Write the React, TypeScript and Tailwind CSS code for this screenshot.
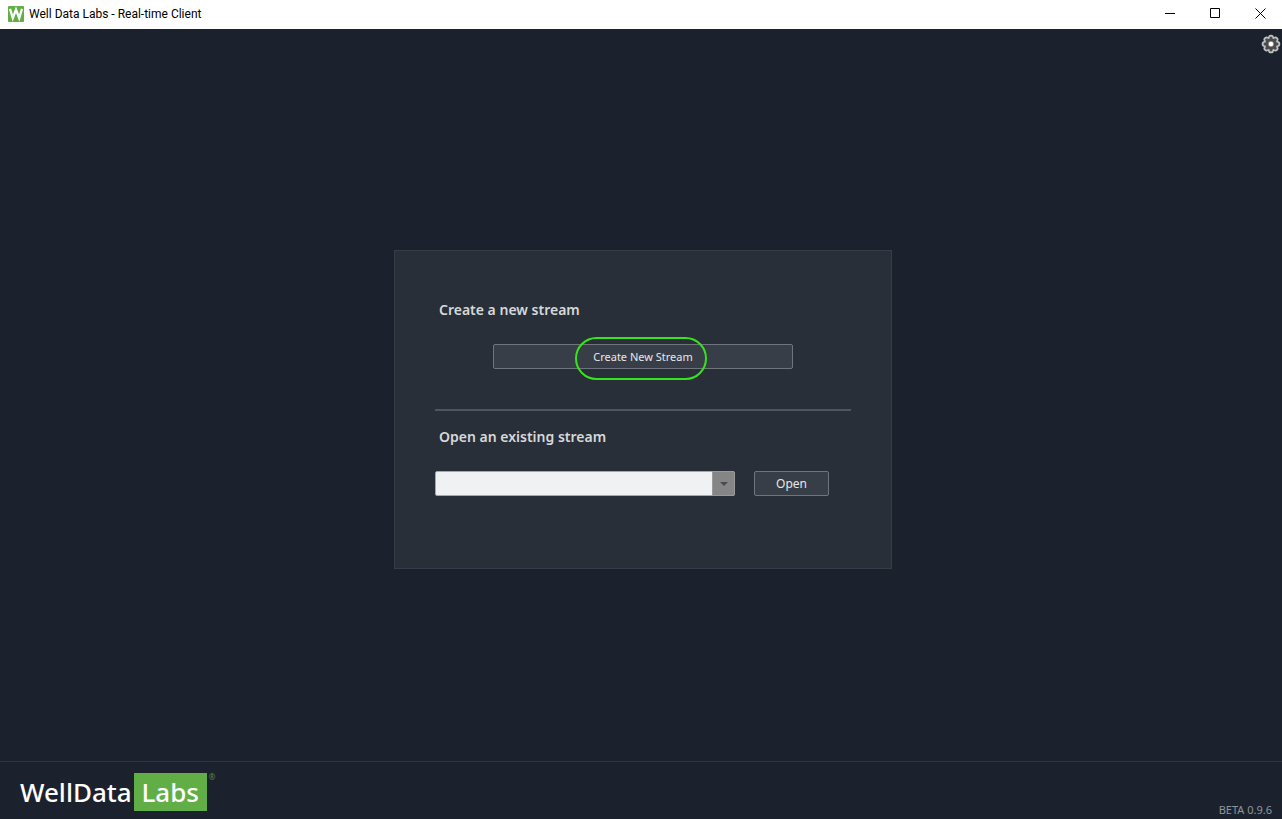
import { useState } from "react";

function AppIcon() {
  return (
    <svg width="16" height="16" viewBox="0 0 16 16" aria-hidden="true">
      <rect width="16" height="16" rx="1" fill="#62ae46" />
      <path
        d="M2 2.8 4.8 12.2 8 3.6 11.2 12.2 14 2.8"
        fill="none"
        stroke="#fff"
        strokeWidth="2.3"
      />
    </svg>
  );
}

function GearIcon() {
  const teeth = [0, 45, 90, 135, 180, 225, 270, 315];
  return (
    <svg width="20" height="20" viewBox="0 0 20 20" aria-hidden="true">
      {teeth.map((a) => (
        <circle key={a} cx="10" cy="3.6" r="2.9" fill="#bfc2c4" transform={`rotate(${a} 10 10)`} />
      ))}
      <circle cx="10" cy="10" r="7.4" fill="#bfc2c4" />
      <circle cx="10" cy="10" r="5.8" fill="#4c4c4c" />
      {teeth.map((a) => (
        <circle key={a} cx="10" cy="4" r="1.5" fill="#4c4c4c" transform={`rotate(${a} 10 10)`} />
      ))}
      <circle cx="10" cy="10" r="3" fill="#8c8c8c" />
      <circle cx="10" cy="10" r="2.2" fill="#fff" />
    </svg>
  );
}

function TitleBar() {
  return (
    <header className="flex h-[29px] shrink-0 items-start justify-between bg-white text-black">
      <div className="flex h-[27px] items-center gap-[5px] pl-2">
        <AppIcon />
        <h1 className="font-['Roboto',sans-serif] text-xs">Well Data Labs - Real-time Client</h1>
      </div>
      <div className="flex h-[26px]">
        <button type="button" aria-label="Minimize" className="flex w-[45px] items-center justify-center">
          <svg width="10" height="10" viewBox="0 0 10 10" stroke="currentColor" shapeRendering="crispEdges">
            <path d="M0 5.5H10" />
          </svg>
        </button>
        <button type="button" aria-label="Maximize" className="flex w-[46px] items-center justify-center">
          <svg width="10" height="10" viewBox="0 0 10 10" fill="none" stroke="currentColor">
            <path d="M.5.5h9v9h-9z" />
          </svg>
        </button>
        <button type="button" aria-label="Close" className="flex w-11 items-center justify-center">
          <svg width="11" height="11" viewBox="0 0 11 11" stroke="currentColor">
            <path d="M.5.5l10 10M10.500.5l-10 10" />
          </svg>
        </button>
      </div>
    </header>
  );
}

function StreamPanel() {
  const [stream, setStream] = useState("");

  return (
    <div className="w-full max-w-[498px] border border-[#363d46] bg-[#292f38] px-10 pt-[49px] pb-[72px]">
      <h2 className="pl-1 text-sm leading-5 font-semibold text-[#d6d8da]">Create a new stream</h2>
      <div className="relative mx-auto mt-6 flex w-[300px]">
        <button
          type="button"
          className="h-[25px] w-full rounded-[2px] border border-[#70757b] bg-[#383e48] pt-px text-[11px] text-[#e6e7e9]"
        >
          Create New Stream
        </button>
        <div className="pointer-events-none absolute -top-[7px] left-[82px] h-[43px] w-[132px] rounded-[22px] border-2 border-[#35e51a]" />
      </div>
      <hr className="mt-10 border-t-2 border-[#50565e]" />
      <h2 className="mt-4 pl-1 text-sm leading-5 font-semibold text-[#d6d8da]">
        Open an existing stream
      </h2>
      <div className="mt-6 flex gap-[19px]">
        <div className="relative flex w-[300px]">
          <select
            aria-label="Existing stream"
            value={stream}
            onChange={(e) => setStream(e.target.value)}
            className="h-[25px] w-full appearance-none rounded-[2px] border border-[#a5a7a9] bg-[#f0f1f3] px-2 text-xs text-[#292f38]"
          >
            <option value=""></option>
          </select>
          <span className="pointer-events-none absolute top-0 right-0 flex h-[25px] w-[23px] items-center justify-center rounded-r-[2px] border border-[#98999a] bg-[#858585]">
            <svg width="8" height="4" viewBox="0 0 8 4" fill="#484b50" aria-hidden="true">
              <path d="M0 0h8L4 4z" />
            </svg>
          </span>
        </div>
        <button
          type="button"
          className="h-[25px] w-[75px] rounded-[2px] border border-[#70757b] bg-[#383e48] pt-px text-xs text-[#e6e7e9]"
        >
          Open
        </button>
      </div>
    </div>
  );
}

function Footer() {
  return (
    <footer className="flex h-[58px] shrink-0 items-start justify-between border-t border-[#2f363f] pr-[10px] pl-5">
      <div className="mt-[11px] flex items-start text-[26px] leading-[38px] font-medium text-white">
        <span>Well</span>
        <span>Data</span>
        <span className="ml-[2px] w-[73px] bg-[#62ae46] text-center">Labs</span>
        <span className="ml-[2px] text-[8px] leading-2 text-[#4a8a3c]">®</span>
      </div>
      <p className="self-end pb-px text-[11px] leading-4 text-[#8f959c]">BETA 0.9.6</p>
    </footer>
  );
}

export default function App() {
  return (
    <div className="flex min-h-screen flex-col bg-[#1b222d] font-['Noto_Sans',sans-serif]">
      <TitleBar />
      <main className="flex flex-1 flex-col">
        <div className="flex h-[30px] shrink-0 items-center justify-end pr-px">
          <button type="button" aria-label="Settings">
            <GearIcon />
          </button>
        </div>
        <div className="flex flex-1 items-center justify-center pb-px pl-1">
          <StreamPanel />
        </div>
      </main>
      <Footer />
    </div>
  );
}
